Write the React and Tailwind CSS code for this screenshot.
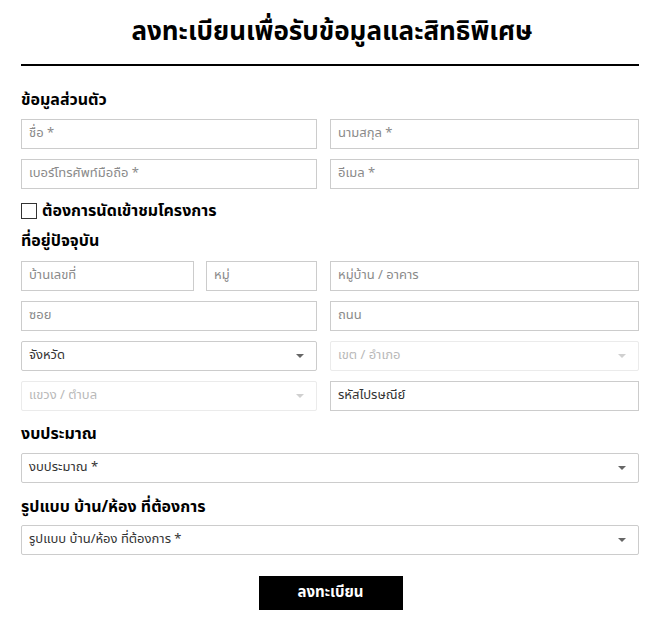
import React from "react";

const Arrow = ({ light }) => (
  <svg width="8" height="4" viewBox="0 0 8 4" className="shrink-0">
    <path d="M0 0 L8 0 L4 4 Z" fill={light ? "#d0d0d0" : "#666"} />
  </svg>
);

const Input = ({ ph, className = "" }) => (
  <div className={`h-[30px] border border-[#cccccc] flex items-center px-[7px] text-[13px] text-[#8a8a8a] ${className}`}>
    {ph}
  </div>
);

const Select = ({ ph, disabled, className = "" }) => (
  <div
    className={`h-[30px] border rounded-[2px] flex items-center justify-between pl-[7px] pr-[12px] text-[13px] ${
      disabled ? "border-[#ebebeb] text-[#b9b9b9]" : "border-[#cccccc] text-[#333]"
    } ${className}`}
  >
    <span>{ph}</span>
    <Arrow light={disabled} />
  </div>
);

const H = ({ children, className = "" }) => (
  <div className={`text-[16px] font-bold text-black leading-none ${className}`}>{children}</div>
);

export default function App() {
  return (
    <div
      className="w-[664px] min-h-[638px] bg-white px-[21px] pt-[14px]"
      style={{ fontFamily: '"Noto Sans Thai", "Noto Sans", "Liberation Sans", sans-serif' }}
    >
      <h1 className="text-center text-[26px] font-bold text-black leading-[36px]">
        ลงทะเบียนเพื่อรับข้อมูลและสิทธิพิเศษ
      </h1>
      <div className="mt-[14px] h-[2px] bg-black w-[618px]" />
      <H className="mt-[26px]">ข้อมูลส่วนตัว</H>
      <div className="mt-[11px] grid grid-cols-[296px_309px] gap-x-[13px] gap-y-[10px] w-[618px]">
        <Input ph="ชื่อ *" />
        <Input ph="นามสกุล *" />
        <Input ph="เบอร์โทรศัพท์มือถือ *" />
        <Input ph="อีเมล *" />
      </div>
      <div className="mt-[14px] flex items-center gap-[5px]">
        <div className="w-[16px] h-[16px] border border-[#333] bg-white" />
        <span className="text-[16px] font-bold leading-none">ต้องการนัดเข้าชมโครงการ</span>
      </div>
      <H className="mt-[14px]">ที่อยู่ปัจจุบัน</H>
      <div className="mt-[12px] grid grid-cols-[296px_309px] gap-x-[13px] gap-y-[10px] w-[618px]">
        <div className="flex gap-[12px]">
          <Input ph="บ้านเลขที่" className="w-[173px]" />
          <Input ph="หมู่" className="flex-1" />
        </div>
        <Input ph="หมู่บ้าน / อาคาร" />
        <Input ph="ซอย" />
        <Input ph="ถนน" />
        <Select ph="จังหวัด" />
        <Select ph="เขต / อำเภอ" disabled />
        <Select ph="แขวง / ตำบล" disabled />
        <Input ph="รหัสไปรษณีย์" className="text-[#333]" />
      </div>
      <H className="mt-[15px]">งบประมาณ</H>
      <Select ph="งบประมาณ *" className="mt-[11px] w-[618px]" />
      <H className="mt-[16px]">รูปแบบ บ้าน/ห้อง ที่ต้องการ</H>
      <Select ph="รูปแบบ บ้าน/ห้อง ที่ต้องการ *" className="mt-[10px] w-[618px]" />
      <div className="mt-[21px] flex justify-center pr-[3px]">
        <button className="w-[144px] h-[34px] bg-black text-white text-[15px] font-bold">ลงทะเบียน</button>
      </div>
    </div>
  );
}
